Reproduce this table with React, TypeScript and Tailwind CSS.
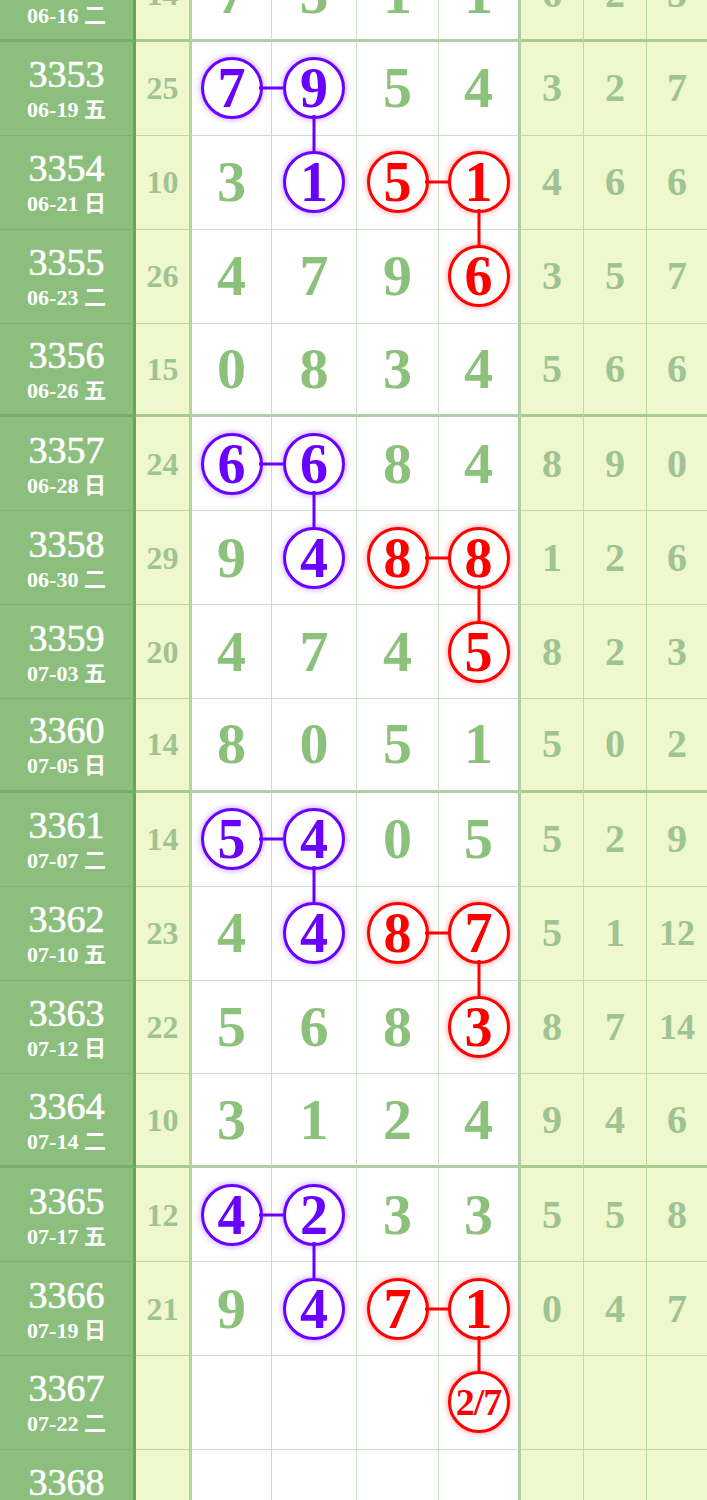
import clsx from 'clsx';

interface Row {
  no: string;
  date: string;
  sum: string;
  n: string[];
  t: string[];
  mark: number; // 1 = purple pair, 2 = purple tail + red pair, 3 = red tail
  thick?: boolean;
}

const rows: Row[] = [
  { no: '3352', date: '06-16 二', sum: '14', n: ['7', '5', '1', '1'], t: ['6', '2', '5'], mark: 0, thick: true },
  { no: '3353', date: '06-19 五', sum: '25', n: ['7', '9', '5', '4'], t: ['3', '2', '7'], mark: 1 },
  { no: '3354', date: '06-21 日', sum: '10', n: ['3', '1', '5', '1'], t: ['4', '6', '6'], mark: 2 },
  { no: '3355', date: '06-23 二', sum: '26', n: ['4', '7', '9', '6'], t: ['3', '5', '7'], mark: 3 },
  { no: '3356', date: '06-26 五', sum: '15', n: ['0', '8', '3', '4'], t: ['5', '6', '6'], mark: 0, thick: true },
  { no: '3357', date: '06-28 日', sum: '24', n: ['6', '6', '8', '4'], t: ['8', '9', '0'], mark: 1 },
  { no: '3358', date: '06-30 二', sum: '29', n: ['9', '4', '8', '8'], t: ['1', '2', '6'], mark: 2 },
  { no: '3359', date: '07-03 五', sum: '20', n: ['4', '7', '4', '5'], t: ['8', '2', '3'], mark: 3 },
  { no: '3360', date: '07-05 日', sum: '14', n: ['8', '0', '5', '1'], t: ['5', '0', '2'], mark: 0, thick: true },
  { no: '3361', date: '07-07 二', sum: '14', n: ['5', '4', '0', '5'], t: ['5', '2', '9'], mark: 1 },
  { no: '3362', date: '07-10 五', sum: '23', n: ['4', '4', '8', '7'], t: ['5', '1', '12'], mark: 2 },
  { no: '3363', date: '07-12 日', sum: '22', n: ['5', '6', '8', '3'], t: ['8', '7', '14'], mark: 3 },
  { no: '3364', date: '07-14 二', sum: '10', n: ['3', '1', '2', '4'], t: ['9', '4', '6'], mark: 0, thick: true },
  { no: '3365', date: '07-17 五', sum: '12', n: ['4', '2', '3', '3'], t: ['5', '5', '8'], mark: 1 },
  { no: '3366', date: '07-19 日', sum: '21', n: ['9', '4', '7', '1'], t: ['0', '4', '7'], mark: 2 },
  { no: '3367', date: '07-22 二', sum: '', n: ['', '', '', '2/7'], t: ['', '', ''], mark: 3 },
  { no: '3368', date: '07-24 五', sum: '', n: ['', '', '', ''], t: ['', '', ''], mark: 0 },
];

type Ball = { color: 'p' | 'r'; right?: boolean; down?: boolean } | null;

const ballFor = (mark: number, col: number): Ball => {
  if (mark === 1 && col === 0) return { color: 'p', right: true };
  if (mark === 1 && col === 1) return { color: 'p', down: true };
  if (mark === 2 && col === 1) return { color: 'p' };
  if (mark === 2 && col === 2) return { color: 'r', right: true };
  if (mark === 2 && col === 3) return { color: 'r', down: true };
  if (mark === 3 && col === 3) return { color: 'r' };
  return null;
};

function Circle({ v, ball }: { v: string; ball: NonNullable<Ball> }) {
  const purple = ball.color === 'p';
  const line = purple ? 'bg-[#6a00ff]' : 'bg-[#ff0000]';
  return (
    <div
      className={clsx(
        'relative z-10 flex h-[62px] w-[62px] items-center justify-center rounded-full border-[3px] bg-white font-bold leading-none',
        purple
          ? 'border-[#6a00ff] text-[#6a00ff] shadow-[0_0_6px_rgba(106,0,255,0.45)]'
          : 'border-[#ff0000] text-[#ff0000] shadow-[0_0_6px_rgba(255,0,0,0.45)]'
      )}
    >
      <span className={v.length > 1 ? 'text-[38px] tracking-[-1px]' : 'text-[56px]'}>{v}</span>
      {ball.right && (
        <div className={`absolute left-[calc(100%-1px)] top-1/2 h-[3px] w-[24px] -translate-y-1/2 ${line}`} />
      )}
      {ball.down && (
        <div className={`absolute left-1/2 top-[calc(100%-1px)] h-[36px] w-[3px] -translate-x-1/2 ${line}`} />
      )}
    </div>
  );
}

export default function App() {
  return (
    <div className="h-[1500px] w-[707px] overflow-hidden bg-white font-['Liberation_Serif','Noto_Sans_CJK_SC',serif]">
      <div className="-mt-[51.87px]">
        {rows.map((row) => {
          const hb = row.thick
            ? 'border-b-[3px] border-b-[rgba(100,160,80,0.5)]'
            : 'border-b border-b-[rgba(100,160,80,0.35)]';
          return (
            <div
              key={row.no}
              className="grid h-[93.87px] grid-cols-[136px_56px_80px_85px_82px_82px_63px_63px_1fr]"
            >
              {/* issue / date */}
              <div
                className={`flex flex-col items-center justify-center gap-[6px] border-r-[3px] border-r-[rgba(50,110,35,0.35)] bg-[#8cbf7e] text-white ${hb}`}
              >
                <span className="text-[38px] leading-none [-webkit-text-stroke:0.6px_white]">{row.no}</span>
                <span className="text-[22px] font-bold leading-none">{row.date}</span>
              </div>
              {/* sum */}
              <div
                className={`flex items-center justify-center border-r-[3px] border-r-[rgba(100,160,80,0.4)] bg-[#eff7cc] text-[32px] font-bold leading-none text-[#9fc392] ${hb}`}
              >
                {row.sum}
              </div>
              {/* draw numbers */}
              {row.n.map((v, i) => {
                const ball = ballFor(row.mark, i);
                return (
                  <div
                    key={i}
                    className={clsx(
                      'flex items-center justify-center bg-white',
                      i === 3
                        ? 'border-r-[3px] border-r-[rgba(100,160,80,0.5)]'
                        : 'border-r border-r-[rgba(100,160,80,0.35)]',
                      hb
                    )}
                  >
                    {v &&
                      (ball ? (
                        <Circle v={v} ball={ball} />
                      ) : (
                        <span className="text-[58px] font-bold leading-none text-[#8cc17c]">{v}</span>
                      ))}
                  </div>
                );
              })}
              {/* tail stats */}
              {row.t.map((v, i) => (
                <div
                  key={i}
                  className={clsx(
                    'flex items-center justify-center bg-[#eff7cc] font-bold leading-none text-[#9fc392]',
                    v.length > 1 ? 'text-[36px]' : 'text-[40px]',
                    i < 2 && 'border-r border-r-[rgba(100,160,80,0.35)]',
                    hb
                  )}
                >
                  {v}
                </div>
              ))}
            </div>
          );
        })}
      </div>
    </div>
  );
}
